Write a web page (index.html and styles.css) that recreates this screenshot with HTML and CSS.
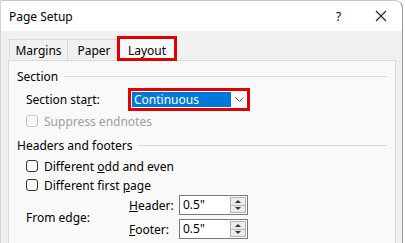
FILE: index.html
```html
<!doctype html>
<html lang="en">
	<head>
		<meta charset="UTF-8" />
		<meta name="viewport" content="width=device-width, initial-scale=1.0" />
		<title>Page Setup</title>
		<link rel="stylesheet" href="styles.css">
	</head>
	<body>
		<div class="window">
			<div class="titlebar">
				<span class="title">Page Setup</span>
				<span class="help">?</span>
				<svg class="close" width="12" height="12" viewBox="0 0 12 12">
					<path d="M1 1L11 11M11 1L1 11" stroke="#222" stroke-width="1.1" fill="none" />
				</svg>
			</div>

			<div class="tabs">
				<div class="tab tab-margins">Margins</div>
				<div class="tab tab-paper">Paper</div>
				<div class="tab active">Layout</div>
			</div>

			<div class="panel">
				<div class="legend legend-section"><span>Section</span></div>

				<div class="row start-row">
					<label class="label-wide">Section sta<u>r</u>t:</label>
					<div class="select">
						<span class="selected">Continuous</span>
						<span class="arrow">
							<svg width="9" height="5" viewBox="0 0 9 5"><path d="M0.5 0.5L4.5 4.5L8.5 0.5" stroke="#555" fill="none" /></svg>
						</span>
					</div>
				</div>

				<div class="check disabled suppress"><span class="box"></span><span>Suppress endnotes</span></div>

				<div class="legend legend-hf"><span>Headers and footers</span></div>

				<div class="check odd"><span class="box"></span><span>Different <u>o</u>dd and even</span></div>
				<div class="check first"><span class="box"></span><span>Different first <u>p</u>age</span></div>

				<div class="edge">
					<div class="edge-label">From edge:</div>
					<div class="edge-fields">
						<div class="field">
							<label><u>H</u>eader:</label>
							<div class="spin">
								<span class="value">0.5"</span>
								<span class="spin-btns"><span class="up"></span><span class="down"></span></span>
							</div>
						</div>
						<div class="field">
							<label><u>F</u>ooter:</label>
							<div class="spin">
								<span class="value">0.5"</span>
								<span class="spin-btns"><span class="up"></span><span class="down"></span></span>
							</div>
						</div>
					</div>
				</div>
			</div>
		</div>
	</body>
</html>
```

FILE: styles.css
```css
html,
body {
	margin: 0;
	padding: 0;
	background: #ffffff;
}
body {
	font-family: "Noto Sans", "Open Sans", sans-serif;
	font-size: 12px;
	color: #000;
	width: 405px;
	height: 243px;
	overflow: hidden;
}
.window {
	width: 403px;
	height: 243px;
	overflow: hidden;
	background: #f0f0f0;
	border-left: 1px solid #d4d4d4;
	border-right: 1px solid #9a9a9a;
	border-top: 1px solid #c8c8c8;
	border-top-right-radius: 8px;
	box-sizing: border-box;
}
.titlebar {
	height: 30px;
	background: #fff;
	display: flex;
	align-items: center;
	padding-left: 8px;
	border-top-right-radius: 8px;
}
.title {
	flex: 1;
}
.help {
	width: 14px;
	margin-right: 25px;
}
.close {
	margin-right: 15px;
}

/* tabs */
.tabs {
	display: flex;
	height: 29px;
	align-items: flex-end;
	padding-left: 8px;
}
.tab {
	height: 21px;
	line-height: 21px;
	text-align: center;
	border: 1px solid #dadada;
	border-bottom: none;
	margin-right: -1px;
	background: #f0f0f0;
	box-sizing: border-box;
}
.tab-margins {
	width: 59px;
}
.tab-paper {
	width: 51px;
	padding-left: 3px;
}
.tab.active {
	width: 60px;
	height: 25px;
	line-height: 27px;
	background: #f9f9f9;
	outline: 3px solid #e00000;
	outline-offset: -3px;
	border-color: #e00000;
	position: relative;
	z-index: 1;
	margin-bottom: -1px;
}

.panel {
	margin-left: 7px;
	width: 388px;
	height: 200px;
	background: #f9f9f9;
	border: 1px solid #dadada;
	box-sizing: border-box;
	padding: 7px 0 0 8px;
}

.legend {
	display: flex;
	align-items: center;
	height: 16px;
	margin-right: 8px;
}
.legend::after {
	content: "";
	flex: 1;
	height: 1px;
	background: #dcdcdc;
	margin-left: 6px;
}

.row {
	display: flex;
	align-items: center;
	padding-left: 9px;
}
.start-row {
	margin-top: 7px;
	height: 17px;
}
.label-wide {
	width: 105px;
}
.select {
	width: 116px;
	height: 17px;
	display: flex;
	background: #fff;
	outline: 3px solid #e00000;
	box-sizing: border-box;
	padding: 1px 0 1px 1px;
}
.selected {
	width: 99px;
	background: #0078d7;
	color: #fff;
	line-height: 15px;
	padding-left: 2px;
	box-sizing: border-box;
}
.arrow {
	flex: 1;
	display: flex;
	align-items: center;
	justify-content: center;
}

.check {
	display: flex;
	align-items: center;
	height: 16px;
	padding-left: 9px;
}
.check .box {
	width: 12px;
	height: 12px;
	border: 1px solid #333;
	border-radius: 3px;
	box-sizing: border-box;
	margin-right: 6px;
	background: #fff;
}
.check.disabled {
	color: #a0a0a0;
}
.check.disabled .box {
	border-color: #c4c4c4;
	background: #f9f9f9;
}
.suppress {
	margin-top: 5px;
}
.legend-hf {
	margin-top: 8px;
}
.odd {
	margin-top: 5px;
}
.first {
	margin-top: 3px;
}

.edge {
	display: flex;
	align-items: center;
	padding-left: 9px;
	margin-top: 2px;
}
.edge-label {
	width: 103px;
}
.edge-fields {
	display: flex;
	flex-direction: column;
	gap: 4px;
}
.field {
	display: flex;
	align-items: center;
}
.field label {
	width: 50px;
}
.spin {
	width: 69px;
	height: 20px;
	background: #fff;
	border: 1px solid #7a7a7a;
	box-sizing: border-box;
	display: flex;
	align-items: stretch;
}
.value {
	flex: 1;
	line-height: 18px;
	padding-left: 3px;
}
.spin-btns {
	width: 14px;
	margin: 1px 1px 1px 0;
	display: flex;
	flex-direction: column;
	border: 1px solid #b5b5b5;
	background: #ececec;
}
.spin-btns span {
	flex: 1;
	display: flex;
	align-items: center;
	justify-content: center;
}
.spin-btns .up {
	border-bottom: 1px solid #b5b5b5;
}
.spin-btns .up::before {
	content: "";
	border-left: 3px solid transparent;
	border-right: 3px solid transparent;
	border-bottom: 3px solid #333;
}
.spin-btns .down::before {
	content: "";
	border-left: 3px solid transparent;
	border-right: 3px solid transparent;
	border-top: 3px solid #333;
}
```
